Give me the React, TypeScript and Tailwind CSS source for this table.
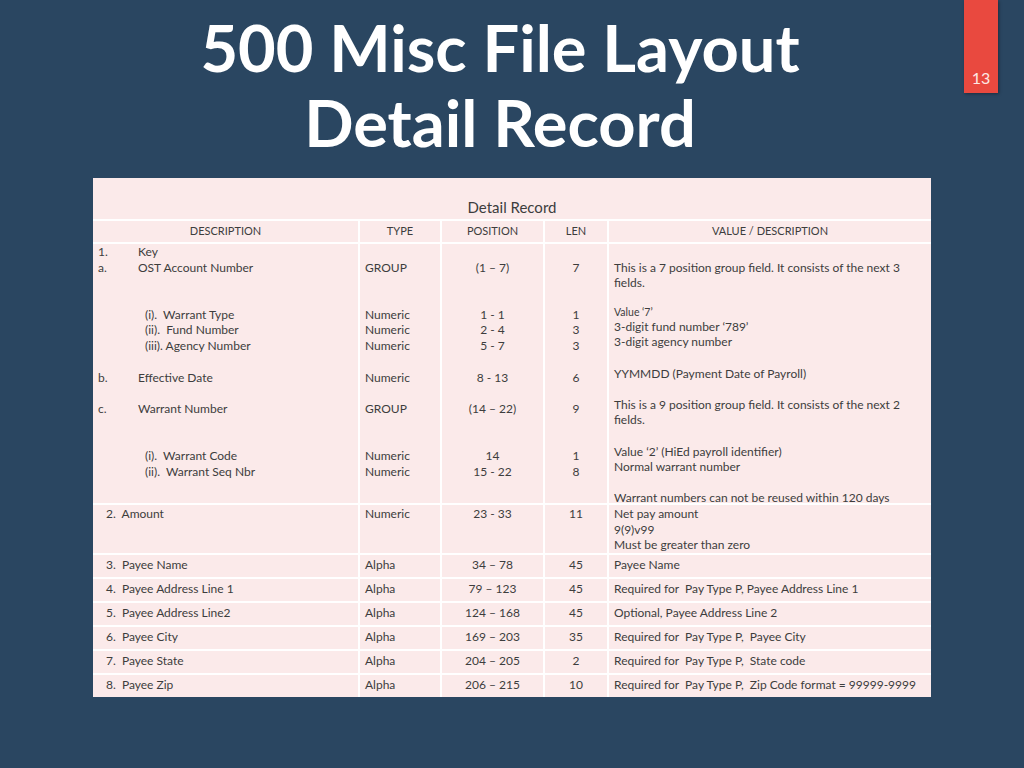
import React from "react";

const F = { fontFamily: "Lato, 'Liberation Sans', sans-serif" };

type Line = { t?: string; small?: boolean };

const col1: string[][] = [
  ["1.", "Key"],
  ["a.", "OST Account Number"],
  [],
  [],
  ["", "(i).  Warrant Type"],
  ["", "(ii).  Fund Number"],
  ["", "(iii). Agency Number"],
  [],
  ["b.", "Effective Date"],
  [],
  ["c.", "Warrant Number"],
  [],
  [],
  ["", "(i).  Warrant Code"],
  ["", "(ii).  Warrant Seq Nbr"],
  [],
];

const col2 = ["", "GROUP", "", "", "Numeric", "Numeric", "Numeric", "", "Numeric", "", "GROUP", "", "", "Numeric", "Numeric", ""];
const col3 = ["", "(1 \u2013 7)", "", "", "1 - 1", "2 - 4", "5 - 7", "", "8 - 13", "", "(14 \u2013 22)", "", "", "14", "15 - 22", ""];
const col4 = ["", "7", "", "", "1", "3", "3", "", "6", "", "9", "", "", "1", "8", ""];
const col5: Line[] = [
  {},
  { t: "This is a 7 position group field. It consists of the next 3" },
  { t: "fields." },
  {},
  { t: "Value \u20187\u2019", small: true },
  { t: "3-digit fund number \u2018789\u2019" },
  { t: "3-digit agency number" },
  {},
  { t: "YYMMDD (Payment Date of Payroll)" },
  {},
  { t: "This is a 9 position group field. It consists of the next 2" },
  { t: "fields." },
  {},
  { t: "Value \u20182\u2019 (HiEd payroll identifier)" },
  { t: "Normal warrant number" },
  {},
  { t: "Warrant numbers can not be reused within 120 days" },
];

const simpleRows = [
  ["3.  Payee Name", "Alpha", "34 \u2013 78", "45", "Payee Name"],
  ["4.  Payee Address Line 1", "Alpha", "79 \u2013 123", "45", "Required for  Pay Type P, Payee Address Line 1"],
  ["5.  Payee Address Line2", "Alpha", "124 \u2013 168", "45", "Optional, Payee Address Line 2"],
  ["6.  Payee City", "Alpha", "169 \u2013 203", "35", "Required for  Pay Type P,  Payee City"],
  ["7.  Payee State", "Alpha", "204 \u2013 205", "2", "Required for  Pay Type P,  State code"],
  ["8.  Payee Zip", "Alpha", "206 \u2013 215", "10", "Required for  Pay Type P,  Zip Code format = 99999-9999"],
];

const cell = "bg-[#fbeaea]";

export default function App() {
  return (
    <div className="w-[1024px] h-[768px] bg-[#2a4661] relative overflow-hidden" style={F}>
      <div className="absolute left-[964px] top-0 w-[34px] h-[93px] bg-[#e9493f] shadow-[1px_1px_3px_rgba(0,0,0,0.35)] flex items-end justify-center pb-[5px]">
        <span className="text-[16px] leading-[20px] text-[#fde8e4]">13</span>
      </div>

      <div className="pt-[10px] pr-[24px] flex flex-col items-center text-white font-bold text-[65px] leading-[75px]">
        <div>500 Misc File Layout</div>
        <div>Detail Record</div>
      </div>

      <div className="ml-[93px] mt-[18px] w-[838px] bg-[#ffffff] grid grid-cols-[265px_80px_101px_62px_322px] gap-[2px] text-[#3d3d3d] text-[12px]">
        <div className={`${cell} col-span-5 h-[41px] flex items-end justify-center pb-[1px] text-[15px]`}>Detail Record</div>

        {["DESCRIPTION", "TYPE", "POSITION", "LEN", "VALUE / DESCRIPTION"].map((h) => (
          <div key={h} className={`${cell} h-[21px] flex items-center justify-center text-[11px]`}>{h}</div>
        ))}

        <div className={`${cell} h-[259px] leading-[15.7px]`}>
          {col1.map((l, i) => (
            <div key={i} className="h-[15.7px] flex">
              {l.length === 0 ? null : l[0] === "" ? (
                <span className="pl-[52px] whitespace-pre">{l[1]}</span>
              ) : (
                <>
                  <span className="w-[45px] pl-[5px]">{l[0]}</span>
                  <span>{l[1]}</span>
                </>
              )}
            </div>
          ))}
        </div>
        <div className={`${cell} h-[259px] leading-[15.7px] pl-[5px]`}>
          {col2.map((t, i) => (
            <div key={i} className="h-[15.7px]">{t}</div>
          ))}
        </div>
        <div className={`${cell} h-[259px] leading-[15.7px] text-center`}>
          {col3.map((t, i) => (
            <div key={i} className="h-[15.7px]">{t}</div>
          ))}
        </div>
        <div className={`${cell} h-[259px] leading-[15.7px] text-center`}>
          {col4.map((t, i) => (
            <div key={i} className="h-[15.7px]">{t}</div>
          ))}
        </div>
        <div className={`${cell} h-[259px] leading-[15.6px] pl-[5px] relative z-10`}>
          {col5.map((l, i) =>
            l.small ? (
              <div key={i} className="h-[12.5px] leading-[12.5px] text-[10.5px]">{l.t}</div>
            ) : (
              <div key={i} className="h-[15.6px]">{l.t}</div>
            )
          )}
        </div>

        <div className={`${cell} h-[48px] leading-[15.7px] pt-[1px] pl-[13px] whitespace-pre`}>2.  Amount</div>
        <div className={`${cell} leading-[15.7px] pt-[1px] pl-[5px]`}>Numeric</div>
        <div className={`${cell} leading-[15.7px] pt-[1px] text-center`}>23 - 33</div>
        <div className={`${cell} leading-[15.7px] pt-[1px] text-center`}>11</div>
        <div className={`${cell} leading-[15.7px] pt-[1px] pl-[5px]`}>
          <div>Net pay amount</div>
          <div>9(9)v99</div>
          <div>Must be greater than zero</div>
        </div>

        {simpleRows.map((r, i) => (
          <React.Fragment key={i}>
            <div className={`${cell} h-[22px] flex items-center pb-[2px] pl-[13px] whitespace-pre`}>{r[0]}</div>
            <div className={`${cell} flex items-center pb-[2px] pl-[5px]`}>{r[1]}</div>
            <div className={`${cell} flex items-center pb-[2px] justify-center`}>{r[2]}</div>
            <div className={`${cell} flex items-center pb-[2px] justify-center`}>{r[3]}</div>
            <div className={`${cell} flex items-center pb-[2px] pl-[5px] whitespace-pre`}>{r[4]}</div>
          </React.Fragment>
        ))}
      </div>
    </div>
  );
}
